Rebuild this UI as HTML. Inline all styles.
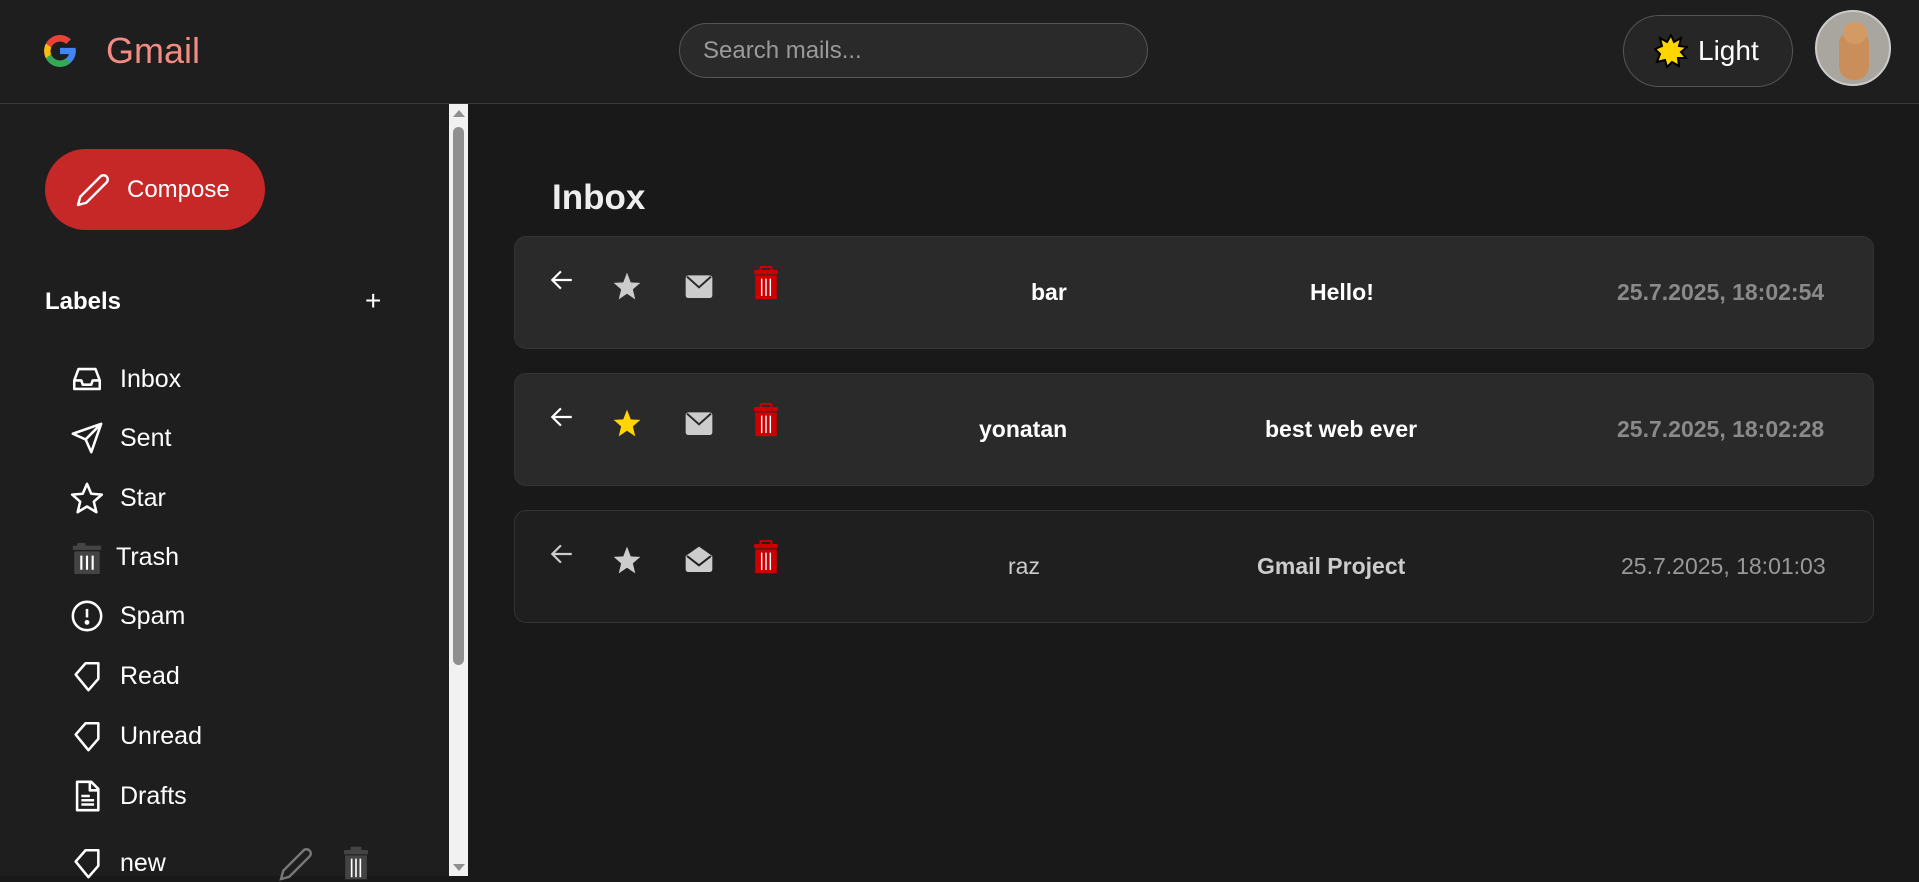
<!DOCTYPE html>
<html><head><meta charset="utf-8"><style>
*{box-sizing:border-box;margin:0;padding:0}
body{width:1919px;height:876px;overflow:hidden;background:#191919;font-family:"Liberation Sans","DejaVu Sans",sans-serif;color:#fff;position:relative}
.hdr{position:absolute;left:0;top:0;width:1919px;height:104px;background:#1e1e1e;border-bottom:1px solid #3a3a3a}
.abs{position:absolute}
.side{position:absolute;left:0;top:104px;width:449px;height:772px;background:#1e1e1e}
.sb{position:absolute;left:449px;top:104px;width:19px;height:772px;background:#f1f1f1}
.item{position:absolute;left:70px;font-size:25px;display:flex;align-items:center}
.item svg{width:34px;height:34px;margin-right:16px}
.card{position:absolute;left:514px;width:1360px;height:113px;border-radius:12px;background:#2a2a2a;border:1px solid #333}
.t{position:absolute;top:42px;font-size:23px;font-weight:bold;white-space:nowrap}
.ic{position:absolute;top:33px}
</style></head><body>
<div class="hdr"></div>
<svg class="abs" style="left:41px;top:32px" width="38" height="38" viewBox="0 0 48 48">
<path d="M43.6 20.1H42V20H24v8h11.3C33.7 32.7 29.2 36 24 36c-6.6 0-12-5.4-12-12s5.4-12 12-12c3.1 0 5.8 1.2 7.9 3l5.7-5.7C34 6.1 29.3 4 24 4 12.9 4 4 12.9 4 24s8.9 20 20 20 20-8.9 20-20c0-1.3-.1-2.6-.4-3.9z" fill="#4285F4"/>
<path d="M6.3 14.7l6.6 4.8C14.7 15.1 19 12 24 12c3.1 0 5.8 1.2 7.9 3l5.7-5.7C34 6.1 29.3 4 24 4 16.3 4 9.7 8.3 6.3 14.7z" fill="#EA4335"/>
<path d="M24 44c5.2 0 9.9-2 13.4-5.200l-6.2-5.2C29.2 35.1 26.7 36 24 36c-5.2 0-9.6-3.3-11.3-7.9l-6.5 5C9.5 39.6 16.2 44 24 44z" fill="#34A853"/>
<path d="M6.3 14.7l6.6 4.8C12.3 21 12 22.5 12 24s.3 3 .7 4.1l-6.5 5C4.8 30.4 4 27.3 4 24s.8-6.7 2.3-9.3z" fill="#FBBC05"/>
</svg>
<div class="abs" style="left:106px;top:30px;font-size:36px;color:#f28b82">Gmail</div>
<div class="abs" style="left:679px;top:23px;width:469px;height:55px;border-radius:28px;background:#2a2a2a;border:1px solid #555;padding-left:23px;line-height:53px;font-size:24px;color:#9a9a9a">Search mails...</div>
<div class="abs" style="left:1623px;top:15px;width:170px;height:72px;border-radius:36px;background:#262626;border:1px solid #555;display:flex;align-items:center;padding-left:30px;font-size:28px"><svg width="34" height="34" viewBox="0 0 34 34" style="margin-right:10px"><polygon points="17,1 20,8 27,4 25,12 33,13 27,18 32,24 24,24 25,32 18,28 13,33 11,26 3,28 6,20 1,15 8,12 6,4 13,8" fill="#ffd600" stroke="#000" stroke-width="2"/></svg>Light</div>
<div class="abs" style="left:1815px;top:10px;width:76px;height:76px;border-radius:50%;background:#a9a6a0;border:2px solid #ccc;overflow:hidden"><div class="abs" style="left:22px;top:18px;width:30px;height:50px;border-radius:14px;background:#c98e5a"></div><div class="abs" style="left:26px;top:10px;width:24px;height:22px;border-radius:50%;background:#d49a63"></div></div>

<div class="side"></div>
<div class="abs" style="left:45px;top:149px;width:220px;height:81px;border-radius:41px;background:#c62828;display:flex;align-items:center;padding-left:30px;font-size:24px"><svg width="36" height="36" viewBox="0 0 24 24" fill="none" stroke="#fff" stroke-width="1.6" stroke-linejoin="round" style="margin-right:16px"><path d="M17 3a2.8 2.8 0 0 1 4 4L7.5 20.5 2 22l1.5-5.5z"/></svg>Compose</div>
<div class="abs" style="left:45px;top:288px;font-size:24px;font-weight:bold">Labels</div>
<div class="abs" style="left:365px;top:285px;font-size:28px;color:#fff">+</div>

<div class="item" style="top:362px"><svg viewBox="0 0 24 24" fill="none" stroke="#fff" stroke-width="1.8" stroke-linejoin="round"><path d="M3 13l3-8h12l3 8v6H3z M3 13h5l1 3h6l1-3h5"/></svg>Inbox</div>
<div class="item" style="top:421px"><svg viewBox="0 0 24 24" fill="none" stroke="#fff" stroke-width="1.8" stroke-linejoin="round"><path d="M22 2L11 13 M22 2l-7 20-4-9-9-4z"/></svg>Sent</div>
<div class="item" style="top:481px"><svg viewBox="0 0 24 24" fill="none" stroke="#fff" stroke-width="1.8" stroke-linejoin="round"><path d="M12 2l3 7 7.5.6-5.7 5 1.8 7.4L12 18l-6.6 4 1.8-7.4-5.7-5L9 9z"/></svg>Star</div>
<div class="item" style="top:540px"><svg viewBox="0 0 24 24" style="margin-right:12px"><rect x="5" y="2" width="6" height="3" rx="1" fill="#444"/><rect x="2" y="4" width="20" height="3" fill="#444"/><rect x="3" y="8" width="18" height="16" rx="1" fill="#444"/><path d="M8 11v10M12 11v10M16 11v10" stroke="#fff" stroke-width="1.5"/></svg>Trash</div>
<div class="item" style="top:599px"><svg viewBox="0 0 24 24" fill="none" stroke="#fff" stroke-width="1.8"><circle cx="12" cy="12" r="10"/><path d="M12 7v6"/><circle cx="12" cy="16.5" r=".8" fill="#fff"/></svg>Spam</div>
<div class="item" style="top:659px"><svg viewBox="0 0 24 24" fill="none" stroke="#fff" stroke-width="1.8" stroke-linejoin="round"><path d="M4 11l7-8h9v11l-7 8z"/></svg>Read</div>
<div class="item" style="top:719px"><svg viewBox="0 0 24 24" fill="none" stroke="#fff" stroke-width="1.8" stroke-linejoin="round"><path d="M4 11l7-8h9v11l-7 8z"/></svg>Unread</div>
<div class="item" style="top:779px"><svg viewBox="0 0 24 24" fill="none" stroke="#fff" stroke-width="1.8" stroke-linejoin="round"><path d="M5 2h10l5 5v15H5z M14 2v6h6 M8 12h6 M8 15h9 M8 18h9"/></svg>Drafts</div>
<div class="item" style="top:846px"><svg viewBox="0 0 24 24" fill="none" stroke="#fff" stroke-width="1.8" stroke-linejoin="round"><path d="M4 11l7-8h9v11l-7 8z"/></svg>new</div>
<svg class="abs" style="left:278px;top:846px" width="36" height="36" viewBox="0 0 24 24" fill="none" stroke="#777" stroke-width="1.6"><path d="M17 3a2.8 2.8 0 0 1 4 4L7.5 20.5 2 22l1.5-5.5z"/></svg>
<svg class="abs" style="left:343px;top:846px" width="26" height="34" viewBox="0 0 24 30"><rect x="7" y="0" width="10" height="4" rx="1" fill="#444"/><rect x="1" y="3" width="22" height="4" fill="#444"/><rect x="2" y="8" width="20" height="22" fill="#444"/><path d="M8 11v17M12 11v17M16 11v17" stroke="#fff" stroke-width="1.5"/></svg>

<div class="sb"></div>
<div class="abs" style="left:453px;top:110px;width:0;height:0;border-left:6px solid transparent;border-right:6px solid transparent;border-bottom:7px solid #8f8f8f"></div>
<div class="abs" style="left:453px;top:127px;width:11px;height:538px;border-radius:6px;background:#8f8f8f"></div>
<div class="abs" style="left:453px;top:864px;width:0;height:0;border-left:6px solid transparent;border-right:6px solid transparent;border-top:7px solid #8f8f8f"></div>

<div class="abs" style="left:552px;top:178px;font-size:35px;font-weight:bold;color:#eee">Inbox</div>

<div class="card" style="top:236px">
 <svg class="ic" style="left:34px;top:30px" width="26" height="26" viewBox="0 0 24 24" fill="none" stroke="#fff" stroke-width="2"><path d="M21 12H4M11 4l-8 8 8 8"/></svg>
 <svg class="ic" style="left:96px" width="32" height="32" viewBox="0 0 24 24"><path d="M12 2l2.8 7.3 7.2.4-5.6 4.8 1.8 7.5L12 17.8 5.8 22l1.8-7.5L2 9.7l7.2-.4z" fill="#ccc"/></svg>
 <svg class="ic" style="left:168px" width="32" height="32" viewBox="0 0 24 24"><rect x="2" y="4" width="20" height="17" rx="2" fill="#ccc"/><path d="M3 5l9 8 9-8" fill="none" stroke="#2a2a2a" stroke-width="1.5"/></svg>
 <svg class="ic" style="left:238px;top:29px" width="26" height="34" viewBox="0 0 24 30"><rect x="7" y="0" width="10" height="4" rx="1" fill="none" stroke="#c00" stroke-width="2"/><rect x="1" y="3" width="22" height="4" rx="1" fill="#c00"/><rect x="2" y="8" width="20" height="22" rx="1" fill="#c00"/><path d="M8 11v16M12 11v16M16 11v16" stroke="#fff" stroke-width="1.3"/></svg>
 <div class="t" style="left:516px">bar</div>
 <div class="t" style="left:795px">Hello!</div>
 <div class="t" style="left:1102px;color:#8a8a8a">25.7.2025, 18:02:54</div>
</div>
<div class="card" style="top:373px">
 <svg class="ic" style="left:34px;top:30px" width="26" height="26" viewBox="0 0 24 24" fill="none" stroke="#fff" stroke-width="2"><path d="M21 12H4M11 4l-8 8 8 8"/></svg>
 <svg class="ic" style="left:96px" width="32" height="32" viewBox="0 0 24 24"><path d="M12 2l2.8 7.3 7.2.4-5.6 4.8 1.8 7.5L12 17.8 5.8 22l1.8-7.5L2 9.7l7.2-.4z" fill="#ffd600"/></svg>
 <svg class="ic" style="left:168px" width="32" height="32" viewBox="0 0 24 24"><rect x="2" y="4" width="20" height="17" rx="2" fill="#ccc"/><path d="M3 5l9 8 9-8" fill="none" stroke="#2a2a2a" stroke-width="1.5"/></svg>
 <svg class="ic" style="left:238px;top:29px" width="26" height="34" viewBox="0 0 24 30"><rect x="7" y="0" width="10" height="4" rx="1" fill="none" stroke="#c00" stroke-width="2"/><rect x="1" y="3" width="22" height="4" rx="1" fill="#c00"/><rect x="2" y="8" width="20" height="22" rx="1" fill="#c00"/><path d="M8 11v16M12 11v16M16 11v16" stroke="#fff" stroke-width="1.3"/></svg>
 <div class="t" style="left:464px">yonatan</div>
 <div class="t" style="left:750px">best web ever</div>
 <div class="t" style="left:1102px;color:#8a8a8a">25.7.2025, 18:02:28</div>
</div>
<div class="card" style="top:510px;background:#1f1f1f">
 <svg class="ic" style="left:34px;top:30px" width="26" height="26" viewBox="0 0 24 24" fill="none" stroke="#ccc" stroke-width="2"><path d="M21 12H4M11 4l-8 8 8 8"/></svg>
 <svg class="ic" style="left:96px" width="32" height="32" viewBox="0 0 24 24"><path d="M12 2l2.8 7.3 7.2.4-5.6 4.8 1.8 7.5L12 17.8 5.8 22l1.8-7.5L2 9.7l7.2-.4z" fill="#ccc"/></svg>
 <svg class="ic" style="left:168px" width="32" height="32" viewBox="0 0 24 24"><path d="M2 9l10-7 10 7v10a2 2 0 0 1-2 2H4a2 2 0 0 1-2-2z" fill="#ccc"/><path d="M3 9l9 7 9-7" fill="none" stroke="#1f1f1f" stroke-width="1.5"/></svg>
 <svg class="ic" style="left:238px;top:29px" width="26" height="34" viewBox="0 0 24 30"><rect x="7" y="0" width="10" height="4" rx="1" fill="none" stroke="#c00" stroke-width="2"/><rect x="1" y="3" width="22" height="4" rx="1" fill="#c00"/><rect x="2" y="8" width="20" height="22" rx="1" fill="#c00"/><path d="M8 11v16M12 11v16M16 11v16" stroke="#fff" stroke-width="1.3"/></svg>
 <div class="t" style="left:493px;font-weight:normal;color:#ccc">raz</div>
 <div class="t" style="left:742px;color:#ccc">Gmail Project</div>
 <div class="t" style="left:1106px;font-weight:normal;color:#999">25.7.2025, 18:01:03</div>
</div>
</body></html>
